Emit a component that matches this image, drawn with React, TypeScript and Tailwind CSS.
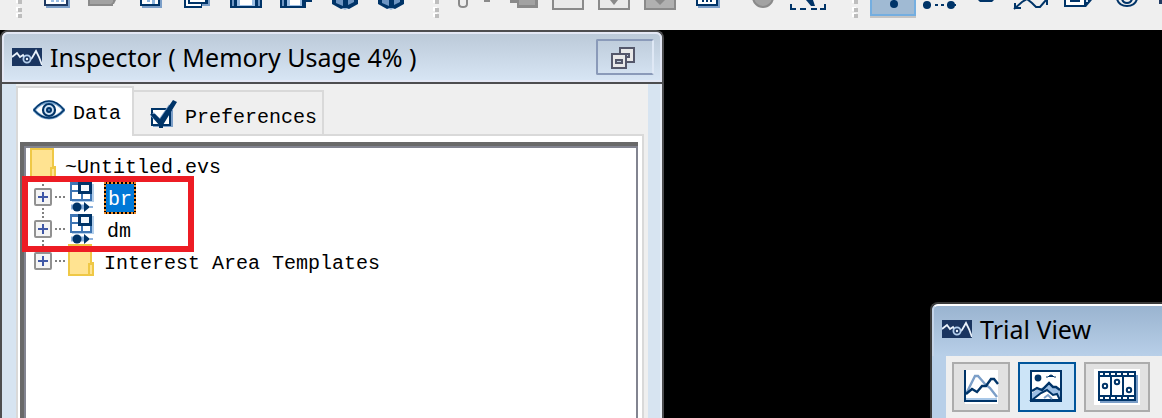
import type { ReactNode } from "react";

const NAVY = "#003468";
const STEEL = "#7c9fc8";
const GREY = "#8a8a8a";

type Tool = { label: string; x: number; art: ReactNode };

const fileTools: Tool[] = [
  {
    label: "New",
    x: 33,
    art: (
      <>
        <path d="M46 0h24v8H46z" fill={STEEL} />
        <path d="M44 0h24v6H44z" fill="#1f3a63" />
        <path d="M46 0h20v4H46z" fill="#fff" />
        <path d="M51 0h3v2h-3zM56 0h3v2h-3zM61 0h3v2h-3z" fill="#9dbfe4" />
      </>
    ),
  },
  {
    label: "Open",
    x: 81,
    art: (
      <>
        <path d="M88 0h28l-2 4h-1v2H88z" fill={GREY} />
        <path d="M90 0h23v2l-2 2H90z" fill="#a2a2a2" />
      </>
    ),
  },
  {
    label: "Import",
    x: 129,
    art: (
      <>
        <path d="M142 0h20v8h-20z" fill={STEEL} />
        <path d="M140 0h20v6h-20z" fill={NAVY} />
        <path d="M142 0h16v4h-16z" fill="#fff" />
        <path d="M147 0h3v2h-3zM152 0h3v4h-3z" fill="#8eb5dd" />
      </>
    ),
  },
  {
    label: "Copy",
    x: 177,
    art: (
      <>
        <path d="M188 0h22v6h-22z" fill={STEEL} />
        <path d="M187 0h21v4h-21z" fill={NAVY} />
        <path d="M184 0h18v8h-18z" fill={NAVY} />
        <path d="M186 0h2v6h-2zM190 0h15v2h-15zM188 4h13v2h-13z" fill="#fff" />
      </>
    ),
  },
  {
    label: "Save",
    x: 225,
    art: (
      <>
        <path d="M230 0h32v8h-32z" fill={NAVY} />
        <path d="M232 0h2v6h-2zM258 0h2v6h-2z" fill="#6e95c2" />
        <path d="M237 0h18v6h-18z" fill="#9dbfe4" />
        <path d="M240 0h12v5h-12z" fill="#fff" />
      </>
    ),
  },
  {
    label: "Save As",
    x: 273,
    art: (
      <>
        <path d="M280 0h32v2h-6v6h-26z" fill={NAVY} />
        <path d="M282 0h2v6h-2z" fill="#6e95c2" />
        <path d="M287 0h15v6h-15z" fill="#9dbfe4" />
        <path d="M290 0h10v5h-10z" fill="#fff" />
      </>
    ),
  },
  {
    label: "Package",
    x: 321,
    art: (
      <>
        <path d="M332 0h26v4l-9 5h-8l-9-5z" fill={NAVY} />
        <path d="M336 0h7v6l-7-3zM348 0h6v2l-6 3z" fill="#6e95c2" />
        <path d="M341 8h8l-4 2z" fill="#9db7d6" />
      </>
    ),
  },
  {
    label: "Unpackage",
    x: 369,
    art: (
      <>
        <path d="M378 0h26v4l-9 5h-8l-9-5z" fill={NAVY} />
        <path d="M382 0h7v6l-7-3zM394 0h6v2l-6 3z" fill="#6e95c2" />
        <path d="M387 8h8l-4 2z" fill="#9db7d6" />
      </>
    ),
  },
];

const editTools: Tool[] = [
  {
    label: "Cut",
    x: 448,
    art: (
      <>
        <path d="M459 0v4q0 3 4 3t4-3V0" fill="#eee" stroke={GREY} strokeWidth="2" />
        <path d="M484 0h6v2h-6z" fill={GREY} />
      </>
    ),
  },
  {
    label: "Duplicate",
    x: 496,
    art: (
      <>
        <path d="M510 0h28v8h-21V3h-7z" fill={GREY} />
        <path d="M519 0h16v5h-16z" fill="#a2a2a2" />
      </>
    ),
  },
  {
    label: "Frame",
    x: 544,
    art: <path d="M553-4h30V9h-30z" fill="#eaeaea" stroke={GREY} strokeWidth="2" />,
  },
  {
    label: "Insert below",
    x: 592,
    art: (
      <>
        <path d="M599-4h30V9h-30z" fill="#eaeaea" stroke={GREY} strokeWidth="2" />
        <path d="M610 0h8l-4 5z" fill={GREY} />
      </>
    ),
  },
  {
    label: "Insert right",
    x: 640,
    art: (
      <>
        <path d="M645-4h30V9h-30z" fill="#b0b0b0" stroke={GREY} strokeWidth="2" />
        <path d="M655 0h10l-5 5z" fill={GREY} />
      </>
    ),
  },
  {
    label: "Report",
    x: 688,
    art: (
      <>
        <path d="M698 0h22v8h-22z" fill={STEEL} />
        <path d="M696 0h22v6h-22z" fill={NAVY} />
        <path d="M698 0h18v4h-18z" fill="#fff" />
        <path d="M702 0h2v2h-2zM706 0h2v2h-2zM710 0h2v2h-2z" fill={NAVY} />
      </>
    ),
  },
  {
    label: "Record",
    x: 736,
    art: <circle cx="763" cy="-3" r="10" fill="#a2a2a2" stroke={GREY} strokeWidth="2" />,
  },
  {
    label: "Select region",
    x: 784,
    art: (
      <>
        <path d="M791 4v5h5M800 9h6M811 9h6M820 9h5V4" fill="none" stroke={NAVY} strokeWidth="2" />
        <path d="M806 0h7l2 6h-4z" fill={NAVY} />
      </>
    ),
  },
];

const viewTools: Tool[] = [
  {
    label: "Path view",
    x: 916,
    art: (
      <>
        <circle cx="927" cy="5" r="4" fill={NAVY} />
        <circle cx="951" cy="5" r="4" fill={NAVY} />
        <path d="M923 5h8M935 5h3M941 5h3M947 5h9" stroke={NAVY} strokeWidth="2" />
      </>
    ),
  },
  { label: "Heat map", x: 962, art: <path d="M978 0h16l-2 2h-12z" fill={NAVY} /> },
  {
    label: "Signal view",
    x: 1008,
    art: (
      <>
        <path d="M1014 9 1022 2l5-3 5 4 4 4h4l6-7" fill="none" stroke={NAVY} strokeWidth="2" />
        <path d="M1015 3v5h6M1047 5V0" fill="none" stroke={NAVY} strokeWidth="2" />
      </>
    ),
  },
  {
    label: "Layers",
    x: 1054,
    art: (
      <>
        <path d="M1064 0h28l-6 7h-22z" fill={NAVY} />
        <path d="M1066 0h18v5h-18z" fill="#fff" />
        <path d="M1070 0h10v2h-10z" fill={NAVY} />
        <path d="M1086 2h2v-2h-2z" fill="#cfe0f1" />
      </>
    ),
  },
  {
    label: "Zoom",
    x: 1100,
    art: (
      <>
        <path d="M1117-1q2 7 10 7t10-7" fill="none" stroke={NAVY} strokeWidth="2" />
        <path d="M1122-1q1 4 5 4t5-4" fill="none" stroke={NAVY} strokeWidth="2" />
      </>
    ),
  },
  { label: "More", x: 1146, art: <path d="M1159 0h20v4h-20z" fill="#1f3a63" /> },
];

function ToolButton({ tool, narrow = false }: { tool: Tool; narrow?: boolean }) {
  return (
    <button type="button" aria-label={tool.label} className={narrow ? "w-[46px] shrink-0" : "w-12 shrink-0"}>
      <svg className="block h-5 w-full" viewBox={`${tool.x} 0 ${narrow ? 46 : 48} 20`}>
        {tool.art}
      </svg>
    </button>
  );
}

function Grip() {
  return (
    <svg className="block h-5 w-2" viewBox="0 0 8 20" aria-hidden="true">
      {[-1, 7, 13].map((y) => (
        <g key={y}>
          <path d={`M0 ${y}h4v4h-4z`} fill="#fff" />
          <path d={`M2 ${y + 1}h4v4h-4z`} fill="#bdbdbd" />
        </g>
      ))}
    </svg>
  );
}

function Logo() {
  return (
    <svg className="h-[18px] w-[30px] shrink-0" viewBox="0 0 30 18" aria-hidden="true">
      <path d="M0 0h30v18H0z" fill="#1a3560" />
      <path d="M0 9 5 5l3 4 3-2 4 7 5-4 4-7 3 6 3 8" fill="none" stroke="#e9f1fa" strokeWidth="1.8" />
      <circle cx="15" cy="11" r="3.6" fill="#1a3560" stroke="#b5d0ee" strokeWidth="1.8" />
      <circle cx="15" cy="11" r="1.2" fill="#e9f1fa" />
    </svg>
  );
}

function Folder() {
  return (
    <svg className="mb-1 h-8 w-[26px] shrink-0" viewBox="0 0 26 32" aria-hidden="true">
      <path d="M1 1h22v18h2v12H1z" fill="#ffe391" stroke="#efc846" strokeWidth="2" />
      <path d="M21 30V20h3" fill="none" stroke="#efc846" strokeWidth="2" />
    </svg>
  );
}

function TrialGroup() {
  return (
    <svg className="h-8 w-[26px] shrink-0" viewBox="0 0 26 32" aria-hidden="true">
      <path d="M4 2h22v18H4z" fill="#b4cfeb" />
      <path d="M2 0h22v19H2z" fill="#3f76b4" />
      <path d="M4 3h6v5H4zM4 10h9v7H4zM15 12h7v5h-7z" fill="#fff" />
      <path d="M10 0h14v12H10z" fill={NAVY} />
      <path d="M13 3h8v6h-8z" fill="#f4f8fc" />
      <path d="M3 25h13" stroke="#8db2dd" strokeWidth="5" />
      <circle cx="9" cy="25" r="4.5" fill={NAVY} />
      <path d="M16 20v10l6-5z" fill={NAVY} />
      <path d="M22 25h3" stroke="#8db2dd" strokeWidth="2" />
    </svg>
  );
}

function Expander({ label, last = false }: { label: string; last?: boolean }) {
  return (
    <button type="button" aria-label={`Expand ${label}`} className="shrink-0">
      <svg className="block h-8 w-8" viewBox="0 0 32 32">
        <path d={last ? "M9 0v6" : "M9 2v30"} stroke="#808080" strokeWidth="2" strokeDasharray="2 2" />
        <path d="M21 15h10" stroke="#808080" strokeWidth="2" strokeDasharray="2 2" />
        <rect x="1" y="7" width="16" height="16" rx="1" fill="#f4f4f4" stroke="#919191" strokeWidth="2" />
        <path d="M4 15h10M9 10v10" stroke="#3f57a6" strokeWidth="2" />
      </svg>
    </button>
  );
}

function EyeIcon() {
  return (
    <svg className="h-5 w-8 shrink-0" viewBox="0 0 32 20" aria-hidden="true">
      <path d="M1 10Q8 2 16 2t15 8q-7 8-15 8T1 10z" fill="#fff" stroke="#78a5cf" strokeWidth="3" />
      <path d="M1 10Q8 1 16 1t15 9q-7 8-15 8T1 10z" fill="none" stroke={NAVY} strokeWidth="1.6" />
      <circle cx="16" cy="10" r="6" fill="#cfe2f4" stroke={NAVY} strokeWidth="2.2" />
      <circle cx="16" cy="10" r="3" fill={NAVY} />
      <circle cx="16" cy="10" r="1" fill="#5c8fc4" />
    </svg>
  );
}

function CheckIcon() {
  return (
    <svg className="h-7 w-7 shrink-0" viewBox="0 0 28 28" aria-hidden="true">
      <path d="M4 10h20v17H4z" fill={STEEL} />
      <path d="M3 9h18v16H3z" fill="#fff" stroke={NAVY} strokeWidth="2" />
      <path d="M3 14l8 8L22 6" fill="none" stroke={STEEL} strokeWidth="5" />
      <path d="M1 14h5l5 5L24 0l4 2-14 23v3h-4v-3z" fill={NAVY} />
    </svg>
  );
}

function ChartIcon() {
  return (
    <svg className="h-9 w-9" viewBox="0 0 36 36" aria-hidden="true">
      <path d="M2 1h33v34H2z" fill="#fff" />
      <path d="M3 25 12 7h3l7 8 5 4 7 9" fill="none" stroke={STEEL} strokeWidth="2.4" />
      <path d="M3 25l6-5 5 3 5-6 4 0 5-7h3l4 5" fill="none" stroke={NAVY} strokeWidth="2.4" />
      <path d="M3 30h31" stroke="#a9c8e8" strokeWidth="2" />
      <path d="M2 1v31h32" fill="none" stroke={NAVY} strokeWidth="2" />
    </svg>
  );
}

function ImageIcon() {
  return (
    <svg className="h-9 w-9" viewBox="0 0 36 36" aria-hidden="true">
      <path d="M2 2h30v30H2z" fill="#fff" stroke={NAVY} strokeWidth="2" />
      <circle cx="9" cy="9" r="3.4" fill={NAVY} />
      <path d="M17 8h2q3-4 6 0h2" fill={NAVY} stroke={NAVY} />
      <path d="M3 24l6-4 6-2 5-5 6 5 5 2v11H3z" fill="#9dbfe4" />
      <path d="M3 22l5-3 5 2 7-7 4 4h3l4 3" fill="none" stroke={NAVY} strokeWidth="2.4" />
      <path d="M3 31l9-7 6-3 6 5 4-1 3 6z" fill="#fff" stroke={NAVY} strokeWidth="2" />
      <path d="M15 29l4-3 4 4" fill="none" stroke={STEEL} strokeWidth="2" />
    </svg>
  );
}

function FilmIcon() {
  return (
    <svg className="h-9 w-[46px]" viewBox="0 0 46 36" aria-hidden="true">
      <path d="M0 0h46v36H0z" fill="#fff" />
      <path d="M6 6h38v28H6z" fill={STEEL} />
      <path d="M5 3h36v28H5z" fill="#fff" stroke={NAVY} strokeWidth="2" />
      <path d="M5 7h36M5 27h36M17 7v20M29 7v20" stroke={NAVY} strokeWidth="2" />
      <path d="M9 5h30M9 29h30" stroke={NAVY} strokeWidth="2" strokeDasharray="2 4" />
      <g fill="#fff" stroke={NAVY} strokeWidth="2">
        <circle cx="11" cy="17" r="2.2" />
        <circle cx="23" cy="13" r="2.2" />
        <circle cx="35" cy="21" r="2.2" />
      </g>
    </svg>
  );
}

function Toolbar() {
  return (
    <header className="flex h-[30px] items-start overflow-hidden bg-[#efefef]">
      <div className="w-[33px] shrink-0 pl-4">
        <Grip />
      </div>
      {fileTools.map((t) => (
        <ToolButton key={t.label} tool={t} />
      ))}
      <div className="w-[31px] shrink-0 pl-4">
        <Grip />
      </div>
      {editTools.map((t) => (
        <ToolButton key={t.label} tool={t} />
      ))}
      <div className="w-[38px] shrink-0 pl-5">
        <Grip />
      </div>
      <button
        type="button"
        aria-label="Fixation view"
        aria-pressed="true"
        className="h-[18px] w-[46px] shrink-0 border-b-2 border-[#c4c4c4]"
      >
        <svg className="block h-4 w-full" viewBox="870 0 46 16">
          <path d="M870 0h46v16h-46z" fill="#74aee0" />
          <path d="M872 0h42v14h-42z" fill="#a0bad3" />
          <circle cx="894" cy="4" r="4" fill={NAVY} />
          <path d="M893 0h2v2h-2z" fill={NAVY} />
        </svg>
      </button>
      {viewTools.map((t) => (
        <ToolButton key={t.label} tool={t} narrow />
      ))}
    </header>
  );
}

function TreeItem({ label, icon, selected = false, last = false }: { label: string; icon: ReactNode; selected?: boolean; last?: boolean }) {
  return (
    <li role="treeitem" aria-selected={selected} className="flex h-8 items-center pl-2">
      <Expander label={label} last={last} />
      <span className="flex w-[38px] shrink-0 pl-[2px]">{icon}</span>
      {selected ? (
        <span className="h-8 bg-black">
          <span className="block h-8 border-2 border-dotted border-[#f08c28] bg-[#0078d7] bg-clip-padding px-[2px] pt-[2px] leading-7 text-white">
            {label}
          </span>
        </span>
      ) : (
        <span className={last ? "pt-[3px] leading-8" : "pt-[3px] pl-[3px] leading-8"}>{label}</span>
      )}
    </li>
  );
}

function Inspector() {
  return (
    <section className="flex flex-col rounded-t-lg border-2 border-b-0 border-[#4d4d4f] bg-[#d7e4f1]">
      <div className="flex h-[50px] items-center rounded-t-md border-2 border-[#e3e7f4] bg-linear-to-b from-[#bccad9] to-[#d7e5f4] pr-[6px] pl-2">
        <Logo />
        <h1 className="flex-1 pl-2 font-['Noto_Sans',sans-serif] text-[25px] leading-8 whitespace-nowrap text-black">
          Inspector ( Memory Usage 4% )
        </h1>
        <button
          type="button"
          aria-label="Restore window"
          className="flex h-9 w-[58px] items-center justify-center rounded-xs border-2 border-[#8a9ab9] border-r-[#dfe8f5] bg-linear-to-b from-[#bfcddc] to-[#d3e1f0] pt-[2px] pr-1"
        >
          <svg className="h-[22px] w-6" viewBox="0 0 24 22" aria-hidden="true">
            <path d="M9 1h14v14H9z" fill="#e9e9e9" stroke="#55586b" strokeWidth="2" />
            <path d="M15 7h3v3h-3z" fill="#c3d0e0" stroke="#55586b" strokeWidth="2" />
            <path d="M1 7h14v14H1z" fill="#e9e9e9" stroke="#55586b" strokeWidth="2" />
            <path d="M5 13h6v3H5z" fill="#c3d0e0" stroke="#55586b" strokeWidth="2" />
          </svg>
        </button>
      </div>
      <div className="flex flex-1 flex-col border-t-2 border-t-[#4d4d4f]">
        <div className="flex flex-1 flex-col border-r-2 border-r-[#e8edf6] pr-3 pl-[14px]">
          <div className="flex flex-1 flex-col bg-[#efefef] pt-[2px] pr-1 font-['Liberation_Mono','Noto_Sans_CJK_SC',monospace] text-xl text-black">
            <div role="tablist" className="flex items-end">
              <button
                type="button"
                role="tab"
                aria-selected="true"
                className="z-10 -mb-[2px] flex h-[50px] items-start gap-2 border-2 border-b-0 border-[#d9d9d9] bg-white pt-3 pr-[11px] pl-[15px]"
              >
                <EyeIcon />
                <span className="pt-[2px] leading-6">Data</span>
              </button>
              <button
                type="button"
                role="tab"
                aria-selected="false"
                className="flex h-11 items-start gap-2 border-2 border-b-0 border-l-0 border-[#d9d9d9] pt-2 pr-[5px] pl-[15px]"
              >
                <CheckIcon />
                <span className="pt-[6px] leading-6">Preferences</span>
              </button>
            </div>
            <div role="tabpanel" className="flex flex-1 flex-col border-2 border-b-0 border-[#d9d9d9] bg-white pt-[6px] pr-1 pl-[2px]">
              <div className="flex flex-1 border-t-4 border-l-4 border-[#696969]">
                <div className="relative flex-1 border-t-2 border-r-2 border-l-2 border-[#828490] pt-[2px]">
                  <ul role="tree" aria-label="Session">
                    <li role="treeitem" className="flex h-8 items-center gap-[9px] pl-1">
                      <Folder />
                      <span className="pt-[3px] leading-8">~Untitled.evs</span>
                    </li>
                    <TreeItem label="br" icon={<TrialGroup />} selected />
                    <TreeItem label="dm" icon={<TrialGroup />} />
                    <TreeItem label="Interest Area Templates" icon={<Folder />} last />
                  </ul>
                  <div className="pointer-events-none absolute top-7 -left-1 h-[76px] w-[172px] border-6 border-[#ed1c24]" />
                </div>
              </div>
            </div>
          </div>
        </div>
      </div>
    </section>
  );
}

function TrialView() {
  return (
    <section className="col-start-3 self-end overflow-hidden rounded-tl-lg border-t-2 border-l-2 border-[#3a3a3a] bg-[#b8cfe8]">
      <div className="flex h-[52px] items-center gap-2 rounded-tl-md border-t-2 border-l-2 border-white border-l-[#c4d4e8] bg-linear-to-b from-[#9ab4d0] to-[#b8cfe8] pb-1 pl-2">
        <Logo />
        <h2 className="font-['Noto_Sans',sans-serif] text-[25px] leading-8 whitespace-nowrap text-black">Trial View</h2>
      </div>
      <div className="pl-[14px]">
        <div className="flex gap-2 bg-[#efefef] p-[6px]">
          <button type="button" aria-label="Temporal graph" className="flex h-[50px] w-[58px] items-center justify-center border-2 border-[#acacac] bg-[#e1e1e1]">
            <ChartIcon />
          </button>
          <button type="button" aria-label="Spatial overlay" aria-pressed="true" className="flex h-[50px] w-[58px] items-center justify-center border-2 border-[#00559b] bg-[#cce4f7]">
            <ImageIcon />
          </button>
          <button type="button" aria-label="Animation" className="flex h-[50px] w-[66px] items-center justify-center border-2 border-[#acacac] bg-[#e1e1e1]">
            <FilmIcon />
          </button>
        </div>
      </div>
    </section>
  );
}

export default function App() {
  return (
    <div className="flex min-h-screen flex-col overflow-hidden bg-black">
      <Toolbar />
      <main className="grid flex-1 grid-cols-[664fr_266fr_232fr]">
        <Inspector />
        <TrialView />
      </main>
    </div>
  );
}
